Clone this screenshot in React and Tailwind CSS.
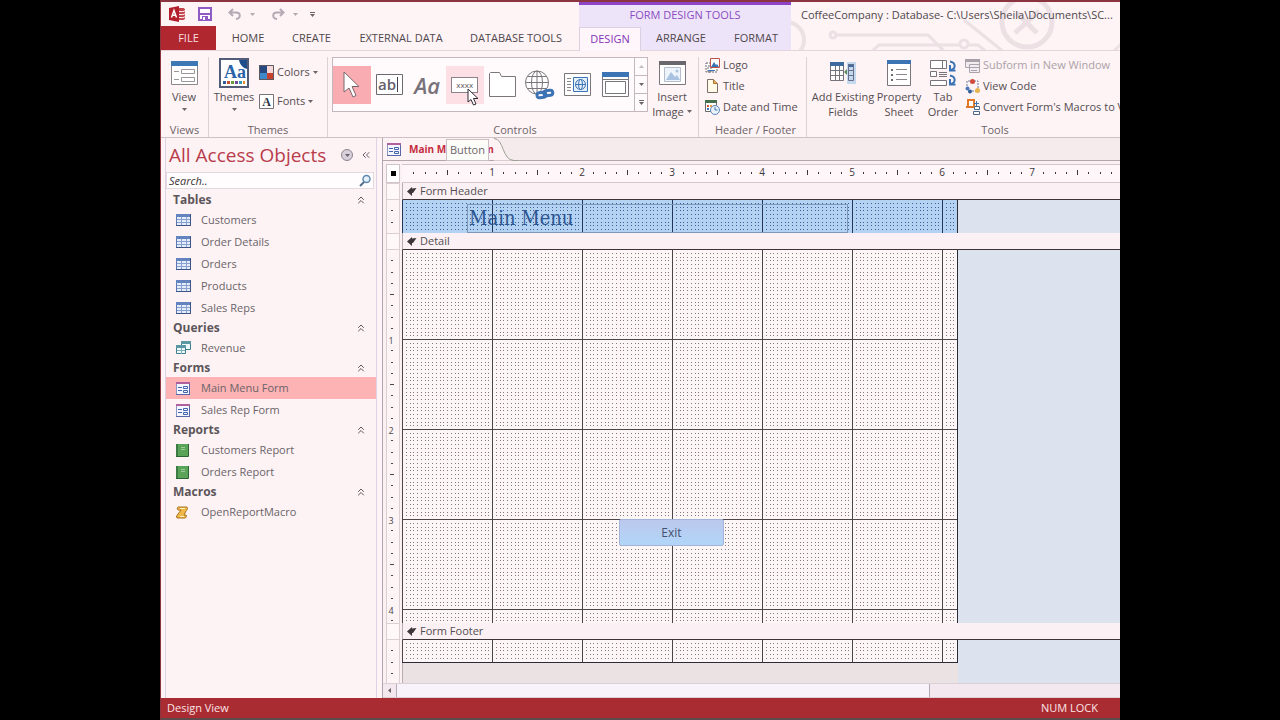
import React, { useState } from "react";
import { FiChevronsLeft, FiChevronsUp } from "react-icons/fi";

const navGroups = [
  {
    name: "Tables",
    icon: "table",
    items: ["Customers", "Order Details", "Orders", "Products", "Sales Reps"],
  },
  { name: "Queries", icon: "query", items: ["Revenue"] },
  { name: "Forms", icon: "form", items: ["Main Menu Form", "Sales Rep Form"] },
  {
    name: "Reports",
    icon: "report",
    items: ["Customers Report", "Orders Report"],
  },
  { name: "Macros", icon: "macro", items: ["OpenReportMacro"] },
];

// Pixels per inch on the rulers and the design grid
const INCH = 90;

/* ---------- Icons ---------- */

function Caret({ className = "" }) {
  return (
    <svg
      width="5"
      height="3"
      viewBox="0 0 5 3"
      className={`shrink-0 ${className}`}
    >
      <path d="M0 0h5L2.5 3z" fill="#6b6468" />
    </svg>
  );
}

function AccessLogo() {
  return (
    <svg width="17" height="16" viewBox="0 0 17 16">
      <path d="M9 2h4c2 0 3 .6 3 1.500v9c0 .9-1 1.500-3 1.500H9z" fill="#c4404a" />
      <path
        d="M10 5.500c3 .4 5 0 6-.8M10 8.500c3 .4 5 0 6-.8M10 11.500c3 .4 5 0 6-.8"
        stroke="#fff"
        fill="none"
      />
      <path d="M0 2l10-2v16L0 14z" fill="#b3202c" />
      <path
        d="M2.500 11.500L5 4.500l2.500 7M3.500 9.300h3"
        stroke="#fff"
        strokeWidth="1.500"
        fill="none"
      />
    </svg>
  );
}

function SaveIcon() {
  return (
    <svg width="14" height="14" viewBox="0 0 14 14">
      <path d="M1 1h12v12H1z" fill="#fff" stroke="#8f5cc4" strokeWidth="2" />
      <path d="M1 7h12" stroke="#8f5cc4" strokeWidth="2" />
      <path d="M4 9h6v4H4z" fill="#8f5cc4" />
      <path d="M5 10h2v3H5z" fill="#fff" />
    </svg>
  );
}

function UndoIcon({ flip }) {
  return (
    <svg
      width="14"
      height="12"
      viewBox="0 0 14 12"
      className={flip ? "-scale-x-100" : ""}
    >
      <path
        d="M5 1L1.500 4.500 5 8M2 4.500h6c5 0 5 6 0 6.500"
        fill="none"
        stroke="#b4aab4"
        strokeWidth="2"
      />
    </svg>
  );
}

function ViewIcon() {
  return (
    <svg width="27" height="25" viewBox="0 0 27 25">
      <path d="M.5.5h26v23H.5z" fill="#fff" stroke="#8b878c" />
      <path d="M0 0h27v5H0z" fill="#3c78b4" />
      <path d="M3 10.500h5M3 18.500h5" stroke="#9a969a" />
      <path
        d="M10.500 8.500h13v4h-13zM10.500 16.500h13v4h-13z"
        fill="none"
        stroke="#9a969a"
      />
    </svg>
  );
}

function ThemesIcon() {
  return (
    <svg width="30" height="30" viewBox="0 0 30 30">
      <path d="M1 1h20l8 8v20H1z" fill="#fff" />
      <path d="M1 1h28v28H1z" fill="none" stroke="#525c78" strokeWidth="2" />
      <path d="M20 2h8v9c-4-1-7-4-8-9z" fill="#1f4e8c" />
      <text
        x="5"
        y="20"
        fontSize="18"
        fontWeight="bold"
        fill="#2a64a8"
        className="font-['Liberation_Serif',serif]"
      >
        Aa
      </text>
      <path d="M4 23h3v3H4z" fill="#2f5f9f" />
      <path d="M8 23h3v3H8z" fill="#c8502c" />
      <path d="M12 23h3v3h-3z" fill="#6b9a3c" />
      <path d="M16 23h3v3h-3z" fill="#6a4c98" />
      <path d="M20 23h3v3h-3z" fill="#2e9ab8" />
      <path d="M24 23h2v3h-2z" fill="#e88c2c" />
    </svg>
  );
}

function ColorsIcon() {
  return (
    <svg width="15" height="15" viewBox="0 0 15 15">
      <path d="M0 0h8v8H0z" fill="#27487e" />
      <path d="M8 0h7v8H8z" fill="#f5d8d8" />
      <path d="M0 8h8v7H0z" fill="#3e88cc" />
      <path d="M8 8h7v7H8z" fill="#c8402e" />
      <path d="M.5.5h14v14H.5z" fill="none" stroke="#5c5860" />
    </svg>
  );
}

function FontsIcon() {
  return (
    <svg width="15" height="15" viewBox="0 0 15 15">
      <path d="M.5.5h14v14H.5z" fill="#fff" stroke="#77737a" />
      <text
        x="7.500"
        y="12"
        fontSize="12"
        fontWeight="bold"
        textAnchor="middle"
        fill="#2c3444"
        className="font-['Liberation_Serif',serif]"
      >
        A
      </text>
    </svg>
  );
}

function PointerIcon() {
  return (
    <svg width="17" height="27" viewBox="0 0 17 27">
      <path
        d="M1 1v20l5-4 4 9 3-1.500-4-9h7z"
        fill="#fff"
        stroke="#75686e"
      />
    </svg>
  );
}

function TextBoxIcon() {
  return (
    <svg width="27" height="21" viewBox="0 0 27 21" className="overflow-visible">
      <path d="M.5.5h26v20H.5z" fill="#fff" stroke="#6e6a70" />
      <text x="2" y="16" fontSize="15" fontWeight="600" fill="#66606a">
        ab
      </text>
      <path d="M21.500 3v15" stroke="#44404a" />
    </svg>
  );
}

function TabControlIcon() {
  return (
    <svg width="27" height="25" viewBox="0 0 27 25">
      <path
        d="M.5 24.500V1.500l1-1h9l2 4h14v20z"
        fill="#fff"
        stroke="#7a767c"
      />
    </svg>
  );
}

function GlobeLinkIcon() {
  return (
    <svg width="30" height="30" viewBox="0 0 30 30">
      <g fill="none" stroke="#7a767c">
        <circle cx="12" cy="12.500" r="11.500" fill="#fff" />
        <ellipse cx="12" cy="12.500" rx="5.500" ry="11.500" />
        <path d="M12 1v23M.5 12.500h23M2.500 6.500h19M2.500 18.500h19" />
      </g>
      <g
        fill="none"
        stroke="#3b73b4"
        strokeWidth="3"
        transform="rotate(-8 20 25)"
      >
        <rect x="12" y="22" width="9" height="5" rx="2.500" />
        <rect x="19" y="21" width="9" height="5" rx="2.500" />
      </g>
    </svg>
  );
}

function WebBrowserIcon() {
  return (
    <svg width="27" height="23" viewBox="0 0 27 23">
      <path d="M.5.5h26v22H.5z" fill="#fff" stroke="#7a767c" />
      <path
        d="M3 5.500h4M3 8.500h4M3 11.500h4M3 14.500h4M3 17.500h4"
        stroke="#8a868c"
      />
      <path d="M9.500 4.500h14v14h-14z" fill="#e6f0fa" stroke="#3b73b4" />
      <g fill="none" stroke="#3b73b4">
        <circle cx="16.500" cy="11.500" r="5" />
        <ellipse cx="16.500" cy="11.500" rx="2" ry="5" />
        <path d="M11.500 11.500h10" />
      </g>
    </svg>
  );
}

function NavigationIcon() {
  return (
    <svg width="27" height="25" viewBox="0 0 27 25">
      <path d="M.5.5h26v24H.5z" fill="#fff" stroke="#7a767c" />
      <path d="M0 0h27v5H0z" fill="#3b73b4" />
      <path
        d="M1 7.500h25M3.500 9.500h20v12h-20z"
        fill="none"
        stroke="#7a767c"
      />
    </svg>
  );
}

function InsertImageIcon() {
  return (
    <svg width="27" height="25" viewBox="0 0 27 25">
      <path d="M.5.5h26v23H.5z" fill="#fff" stroke="#7a767c" />
      <path d="M0 0h27v4H0z" fill="#6b676e" />
      <path d="M5.500 6.500h16v14h-16z" fill="#eef4fb" stroke="#b6bcc8" />
      <path d="M7 19l5-8 4 5 2-2 3 5z" fill="#a8c2e0" />
      <circle cx="18" cy="10" r="1.500" fill="#a8c2e0" />
    </svg>
  );
}

function LogoIcon() {
  return (
    <svg width="15" height="15" viewBox="0 0 15 15">
      <path
        d="M1 5h5v9H1zM3 8h9v6H3z"
        fill="#fff"
        stroke="#6c686e"
        strokeDasharray="2 1"
      />
      <path d="M5.500.5h9v9h-9z" fill="#fff" stroke="#c0504a" />
      <path d="M6 9l3-5 2 3 1-1 2 3z" fill="#3b73b4" />
      <path d="M3 12.500h7" stroke="#3b73b4" />
    </svg>
  );
}

function TitleIcon() {
  return (
    <svg width="15" height="14" viewBox="0 0 15 14">
      <path d="M2.500.5h6l4 4v9h-10z" fill="#fffbe8" stroke="#7a7068" />
      <path d="M8.500.5v4h4" fill="#e8b058" stroke="#b07830" />
    </svg>
  );
}

function DateTimeIcon() {
  return (
    <svg width="15" height="15" viewBox="0 0 15 15">
      <path d="M.5.5h11v11H.5z" fill="#fff" stroke="#6c686e" />
      <path d="M0 0h12v3H0z" fill="#44704c" />
      <path d="M2 5h2v2H2z" fill="#d85a3c" />
      <path d="M5 5h2v2H5zM8 5h2v2H8z" fill="#e8a03c" />
      <path d="M2 8h2v2H2z" fill="#3b73b4" />
      <circle cx="10" cy="10" r="4.500" fill="#eaf2fb" stroke="#5a86ba" />
      <path d="M10 7v3h2.500" fill="none" stroke="#3b73b4" />
    </svg>
  );
}

function AddFieldsIcon() {
  return (
    <svg width="27" height="22" viewBox="0 0 27 22">
      <path d="M17 0h9v22h-9z" fill="#c4d8ee" />
      <path d="M.5.5h13v18H.5z" fill="#fff" stroke="#77737a" />
      <path d="M0 0h14v4H0zM18 2h6v3h-6z" fill="#3e6aa0" />
      <path
        d="M1 8.500h13M1 13.500h13M5.500 4v15M9.500 4v15"
        stroke="#77737a"
      />
      <path
        d="M18.500 2.500h5v16h-5zM18 8.500h6M18 13.500h6"
        fill="none"
        stroke="#66708a"
      />
      <path d="M17 7l-3 3 3 3z" fill="#5a8a58" />
    </svg>
  );
}

function PropertySheetIcon() {
  return (
    <svg width="24" height="26" viewBox="0 0 24 26">
      <path d="M.5.5h23v25H.5z" fill="#fff" stroke="#7a767c" />
      <path d="M0 0h24v4H0z" fill="#3b73b4" />
      <path d="M9 9.500h11M9 14.500h11M9 19.500h11" stroke="#8a868c" />
      <path d="M4 9h2v2H4zM4 14h2v2H4zM4 19h2v2H4z" fill="#6c686e" />
    </svg>
  );
}

function TabOrderIcon() {
  return (
    <svg width="27" height="27" viewBox="0 0 27 27">
      <g fill="#fff" stroke="#77737a">
        <path d="M.5.5h16v8H.5zM12.500.5v8M.5 11.500h6v5h-6zM.5 20.500h16v5H.5z" />
        <path d="M9 12.500h8M9 14.500h8M9 16.500h8" />
      </g>
      <g fill="none" stroke="#3b73b4" strokeWidth="2">
        <path d="M20 1.500c6 1 6 7 1 8.500M20 15.500c6 1 6 7 1 8.500" />
        <path d="M20 5v5.500h5.500M20 19v5.500h5.500" />
      </g>
    </svg>
  );
}

function SubformIcon() {
  return (
    <svg width="15" height="15" viewBox="0 0 15 15">
      <path
        d="M.5 1.500h14v8H.5zM4.500 6.500h10v8h-10z"
        fill="#f2ecf0"
        stroke="#aaa4aa"
      />
      <path d="M0 1h15v3H0z" fill="#a8a2a8" />
      <path d="M6 9.500h6M6 12.500h6" stroke="#aaa4aa" />
    </svg>
  );
}

function ViewCodeIcon() {
  return (
    <svg width="15" height="15" viewBox="0 0 15 15">
      <path
        d="M5 2H2v7M9 2h4v7M4 12h7"
        stroke="#6c7a98"
        fill="none"
        strokeDasharray="2 1"
      />
      <circle cx="7.500" cy="2.500" r="2.500" fill="#d04a3c" />
      <circle cx="2.500" cy="9.500" r="2" fill="#4a78b8" />
      <circle cx="5" cy="12.500" r="2" fill="#2f5c9c" />
      <circle cx="12.500" cy="11.500" r="2.500" fill="#e8b44c" />
    </svg>
  );
}

function ConvertIcon() {
  return (
    <svg width="15" height="16" viewBox="0 0 15 16">
      <path
        d="M3 1h6v7H3zM1 8h6"
        fill="#fff"
        stroke="#e07828"
        strokeWidth="2"
      />
      <path d="M11.500 2v5M9 4.500h5" stroke="#3b73b4" />
      <path
        d="M9.500 7.500h5v3h-5zM8.500 12.500h6v3h-6z"
        fill="#fff"
        stroke="#4a6888"
      />
    </svg>
  );
}

function ObjectIcon({ type }) {
  if (type === "query") {
    return (
      <svg width="15" height="14" viewBox="0 0 15 14">
        <path d="M5.500.5h9v8h-9z" fill="#eef8fa" stroke="#3f7f8c" />
        <path d="M5 0h10v3H5z" fill="#5c98a4" />
        <path d="M.500 4.500h9v8h-9z" fill="#eef8fa" stroke="#3f7f8c" />
        <path d="M0 4h10v3H0z" fill="#5c98a4" />
        <path d="M1 9.500h8M5.500 7v6" stroke="#7fb0ba" />
      </svg>
    );
  }
  if (type === "form") {
    return (
      <svg width="14" height="13" viewBox="0 0 14 13">
        <path d="M.5.5h13v12H.5z" fill="#f4f6ff" stroke="#8a94c4" />
        <path d="M0 0h14v2H0z" fill="#b0609c" />
        <path d="M0 12.500h14M13.500 2v11" stroke="#5868a8" />
        <path
          d="M2 5.500h4M2 8.500h4M7.500 4.500h4v2h-4zM7.500 8.500h4v2h-4z"
          fill="none"
          stroke="#4464b0"
        />
      </svg>
    );
  }
  if (type === "report") {
    return (
      <svg width="13" height="13" viewBox="0 0 13 13">
        <path d="M0 0h12v12H0z" fill="#5aa45a" />
        <path d="M0 0h2v12H0z" fill="#3c7c44" />
        <path d="M0 12.500h12.500V0" fill="none" stroke="#2c6434" />
        <path d="M5 3.500h4M5 5.500h4" stroke="#9ccc9a" />
      </svg>
    );
  }
  if (type === "macro") {
    return (
      <svg width="13" height="13" viewBox="0 0 13 13">
        <path
          d="M2 1h9c1 2 0 3-1 4L8 9h2c1 1 0 3-1 3H1c-1-1 0-3 1-4l3-4H2C1 3 1 2 2 1z"
          fill="#f0b848"
          stroke="#a87420"
        />
        <path d="M4 2.500h5M4 10.500h4" stroke="#fff0b8" />
      </svg>
    );
  }
  return (
    <svg width="15" height="12" viewBox="0 0 15 12">
      <path d="M.5.5h14v11H.5z" fill="#e4ecfa" stroke="#5c78b4" />
      <path d="M0 0h15v3H0z" fill="#6484c0" />
      <path d="M0 11.500h15M14.500 0v12" stroke="#3c5488" />
      <path d="M1 5.500h13M1 8.500h13M5.500 3v8M10.500 3v8" stroke="#87a0d0" />
    </svg>
  );
}

function Circuit() {
  return (
    <svg
      className="absolute inset-0 h-full w-full"
      fill="none"
      stroke="#ece0e5"
      strokeWidth="3"
    >
      <circle cx="-5" cy="38" r="18" strokeWidth="4" />
      <circle cx="42" cy="33" r="3" />
      <path d="M45 33h92l16 16" />
      <path d="M80 50l8-7h82M177 43h10l10 8" />
      <circle cx="173" cy="42" r="4" />
      <path d="M173 18l40 32" />
      <circle cx="236" cy="20" r="25" strokeWidth="5" />
      <path d="M224 31l24-22M226 11l20 20" strokeWidth="5" />
      <path d="M322 50l8-8" />
    </svg>
  );
}

/* ---------- Ribbon ---------- */

function RibbonTab({ label, className, color = "text-[#4e484c]" }) {
  return (
    <button className={`h-6 text-center whitespace-nowrap ${color} ${className}`}>
      {label}
    </button>
  );
}

function Header() {
  return (
    <header className="flex h-[51px] shrink-0 border-t-2 border-[#8a3440] text-[11px]">
      <div className="flex w-[418px] shrink-0 flex-col">
        <div className="flex h-[25px] items-center pl-2">
          <AccessLogo />
          <button aria-label="Save" className="ml-3">
            <SaveIcon />
          </button>
          <button aria-label="Undo" className="ml-4 flex items-center gap-2">
            <UndoIcon />
            <Caret className="opacity-50" />
          </button>
          <button aria-label="Redo" className="ml-4 flex items-center gap-2">
            <UndoIcon flip />
            <Caret className="opacity-50" />
          </button>
          <button
            aria-label="Customize toolbar"
            className="ml-3 flex flex-col items-center gap-px"
          >
            <span className="h-px w-[5px] bg-[#6b6468]" />
            <Caret />
          </button>
        </div>
        <nav className="flex border-b border-[#e4d6dc]">
          <RibbonTab
            label="FILE"
            color="text-[#fbdfe2]"
            className="w-[55px] bg-[#b0272f]"
          />
          <RibbonTab label="HOME" className="ml-[2px] w-[60px]" />
          <RibbonTab label="CREATE" className="w-[67px]" />
          <RibbonTab label="EXTERNAL DATA" className="w-28" />
          <RibbonTab label="DATABASE TOOLS" className="w-[118px]" />
        </nav>
      </div>
      <div className="flex w-[212px] shrink-0 flex-col bg-[#eee4f9]">
        <div className="h-[26px] border-t-3 border-[#8e44c4] text-center leading-5 text-[#8a4cc0]">
          FORM DESIGN TOOLS
        </div>
        <nav className="-mt-px flex">
          <RibbonTab
            label="DESIGN"
            color="text-[#8434b8]"
            className="w-[62px] border-x border-t border-[#dccfe0] bg-[#fef6fa]"
          />
          <RibbonTab
            label="ARRANGE"
            className="w-20 border-b border-[#e4d6dc]"
          />
          <RibbonTab
            label="FORMAT"
            className="w-[70px] border-b border-[#e4d6dc]"
          />
        </nav>
      </div>
      <div className="relative min-w-0 flex-1 overflow-hidden border-b border-[#e4d6dc]">
        <Circuit />
        <h1 className="relative pl-[10px] leading-[26px] whitespace-nowrap text-[#4e484c]">
          CoffeeCompany : Database- C:\Users\Sheila\Documents\SC...
        </h1>
      </div>
    </header>
  );
}

function RibbonGroup({ label, className, children }) {
  return (
    <section
      className={`flex shrink-0 flex-col justify-between border-r border-[#ddd0d6] ${className}`}
    >
      <div className="flex">{children}</div>
      <h2 className="text-center leading-[14px] text-[#6c6468]">{label}</h2>
    </section>
  );
}

function BigButton({ icon, lines, className, caret }) {
  return (
    <button className={`flex shrink-0 flex-col items-center ${className}`}>
      <span className="flex h-8 items-center">{icon}</span>
      {lines.map((line, i) => (
        <span
          key={line}
          className="flex items-center gap-[3px] leading-[15px] whitespace-nowrap"
        >
          {line}
          {caret === "side" && i === lines.length - 1 && <Caret />}
        </span>
      ))}
      {caret === "below" && <Caret className="mt-1" />}
    </button>
  );
}

function SmallButton({ icon, label, caret, disabled }) {
  return (
    <button
      disabled={disabled}
      className="flex h-4 items-center gap-[3px] whitespace-nowrap disabled:text-[#aaa2a8]"
    >
      {icon}
      {label}
      {caret && <Caret />}
    </button>
  );
}

function ControlsGallery() {
  const cell = "flex h-[38px] flex-1 items-center justify-center";
  return (
    <div className="flex h-[55px] w-[316px] border border-[#c4b8be] bg-[#fffafb]">
      <div className="flex flex-1 items-center">
        <button aria-label="Select" className={`${cell} bg-[#f9adb2]`}>
          <PointerIcon />
        </button>
        <button aria-label="Text Box" className={cell}>
          <TextBoxIcon />
        </button>
        <button
          aria-label="Label"
          className={`${cell} text-[22px] font-semibold text-[#77717a] italic`}
        >
          Aa
        </button>
        <button
          aria-describedby="control-tip"
          className={`${cell} relative bg-[#fde0e6]`}
        >
          <span className="border border-[#8a848a] bg-white px-1 text-[8px] leading-[14px] text-[#5c565c]">
            xxxx
          </span>
          <svg
            width="12"
            height="18"
            viewBox="0 0 12 18"
            className="absolute top-[22px] left-[21px] z-10"
          >
            <path
              d="M1 1v13l3-2.500 2.500 5.500 2.500-1-2.500-5.500H11z"
              fill="#fff"
              stroke="#2c2c34"
            />
          </svg>
          <span
            id="control-tip"
            role="tooltip"
            className="absolute top-[73px] left-0 z-10 border border-[#c8c0c4] bg-[#fcfcf8] px-[3px] leading-5 text-[#6c666c]"
          >
            Button
          </span>
        </button>
        <button aria-label="Tab Control" className={cell}>
          <TabControlIcon />
        </button>
        <button aria-label="Hyperlink" className={cell}>
          <GlobeLinkIcon />
        </button>
        <button aria-label="Web Browser" className={cell}>
          <WebBrowserIcon />
        </button>
        <button aria-label="Navigation" className={cell}>
          <NavigationIcon />
        </button>
      </div>
      <div className="flex w-[13px] flex-col divide-y divide-[#c4b8be] border-l border-[#c4b8be]">
        <button
          aria-label="Scroll up"
          className="flex flex-1 items-center justify-center"
        >
          <Caret className="rotate-180 opacity-40" />
        </button>
        <button
          aria-label="Scroll down"
          className="flex flex-1 items-center justify-center"
        >
          <Caret />
        </button>
        <button
          aria-label="More controls"
          className="flex flex-1 flex-col items-center justify-center gap-px"
        >
          <span className="h-px w-[5px] bg-[#6b6468]" />
          <Caret />
        </button>
      </div>
    </div>
  );
}

function Ribbon() {
  return (
    <div className="flex h-[87px] shrink-0 border-b border-[#cfc0c6] pt-[6px] text-[11px] leading-4 text-[#544e52]">
      <RibbonGroup label="Views" className="w-12">
        <BigButton
          icon={<ViewIcon />}
          lines={["View"]}
          caret="below"
          className="w-[46px]"
        />
      </RibbonGroup>
      <RibbonGroup label="Themes" className="w-[119px]">
        <BigButton
          icon={<ThemesIcon />}
          lines={["Themes"]}
          caret="below"
          className="w-[50px]"
        />
        <div className="flex flex-col gap-[13px] pt-[7px]">
          <SmallButton icon={<ColorsIcon />} label="Colors" caret />
          <SmallButton icon={<FontsIcon />} label="Fonts" caret />
        </div>
      </RibbonGroup>
      <RibbonGroup label="Controls" className="w-[371px] pl-1">
        <ControlsGallery />
        <BigButton
          icon={<InsertImageIcon />}
          lines={["Insert", "Image"]}
          caret="side"
          className="w-12"
        />
      </RibbonGroup>
      <RibbonGroup label="Header / Footer" className="w-[108px] pl-[6px]">
        <div className="flex flex-col gap-[5px]">
          <SmallButton icon={<LogoIcon />} label="Logo" />
          <SmallButton icon={<TitleIcon />} label="Title" />
          <SmallButton icon={<DateTimeIcon />} label="Date and Time" />
        </div>
      </RibbonGroup>
      <RibbonGroup label="Tools" className="w-[372px] pl-[5px]">
        <BigButton
          icon={<AddFieldsIcon />}
          lines={["Add Existing", "Fields"]}
          className="w-[62px]"
        />
        <BigButton
          icon={<PropertySheetIcon />}
          lines={["Property", "Sheet"]}
          className="w-[50px]"
        />
        <BigButton
          icon={<TabOrderIcon />}
          lines={["Tab", "Order"]}
          className="w-[38px]"
        />
        <div className="flex flex-col gap-[5px] pl-[3px]">
          <SmallButton
            icon={<SubformIcon />}
            label="Subform in New Window"
            disabled
          />
          <SmallButton icon={<ViewCodeIcon />} label="View Code" />
          <SmallButton
            icon={<ConvertIcon />}
            label="Convert Form's Macros to V"
          />
        </div>
      </RibbonGroup>
    </div>
  );
}

/* ---------- Navigation pane ---------- */

function NavigationPane({ selected, onSelect }) {
  const [query, setQuery] = useState("");

  return (
    <aside className="ml-1 flex w-[212px] shrink-0 flex-col border-x border-[#dcd4e4] bg-[#fdf3f5]">
      <div className="flex h-[34px] items-center pl-[3px]">
        <h2 className="flex-1 text-[19px] whitespace-nowrap text-[#b83c4c]">
          All Access Objects
        </h2>
        <button
          aria-label="Filter objects"
          className="mr-[7px] flex h-3 w-3 items-center justify-center rounded-full border border-[#8c868e] bg-[#d8d0da]"
        >
          <Caret />
        </button>
        <button aria-label="Collapse pane" className="mr-1 text-[#66606a]">
          <FiChevronsLeft size={12} />
        </button>
      </div>
      <div className="mr-[2px] flex h-[17px] items-center border border-[#e2dae0] bg-[#fffdfd]">
        <input
          type="text"
          aria-label="Search objects"
          placeholder="Search.."
          value={query}
          onChange={(e) => setQuery(e.target.value)}
          className="w-0 flex-1 pl-[2px] text-[11px] leading-[15px] outline-none placeholder:text-[#3c3438] placeholder:italic"
        />
        <svg width="14" height="14" viewBox="0 0 14 14" className="mr-px">
          <circle
            cx="8.500"
            cy="5"
            r="3.500"
            fill="#e4f0fa"
            stroke="#6088b0"
            strokeWidth="1.500"
          />
          <path d="M6 8l-4 4" stroke="#50708c" strokeWidth="2" />
        </svg>
      </div>
      <div className="pt-[2px]">
        {navGroups.map((group) => (
          <section key={group.name}>
            <button className="flex h-[18px] w-full items-center justify-between pr-[9px] pl-[7px] text-xs font-bold text-[#5c565a]">
              {group.name}
              <FiChevronsUp size={12} />
            </button>
            <ul>
              {group.items.map((item) => (
                <li key={item}>
                  <button
                    onClick={() => onSelect(item)}
                    className={`flex h-[22px] w-full items-center pl-[10px] text-[11px] text-[#6a6468] ${
                      selected === item ? "bg-[#fdb2b4]" : ""
                    }`}
                  >
                    <span className="w-[25px]">
                      <ObjectIcon type={group.icon} />
                    </span>
                    {item}
                  </button>
                </li>
              ))}
            </ul>
          </section>
        ))}
      </div>
    </aside>
  );
}

/* ---------- Form designer ---------- */

function HorizontalRuler() {
  const marks = Array.from({ length: 63 }, (_, i) => i + 1);
  return (
    <svg className="h-full w-full" fill="#3c363a">
      {marks.map((n) => {
        const x = Math.round((n * INCH) / 8);
        if (n % 8 === 0) {
          return (
            <text key={n} x={x} y="11" fontSize="10" textAnchor="middle">
              {n / 8}
            </text>
          );
        }
        return n % 4 === 0 ? (
          <rect key={n} x={x} y="5" width="1" height="5" />
        ) : (
          <rect key={n} x={x} y="7" width="1" height="2" />
        );
      })}
    </svg>
  );
}

function VerticalRuler({ marks }) {
  const list = Array.from({ length: marks }, (_, i) => i + 1);
  return (
    <svg className="h-full w-full" fill="#4c464a">
      {list.map((n) => {
        const y = Math.round((n * INCH) / 8) - 1;
        if (n % 8 === 0) {
          return (
            <text key={n} x="4" y={y + 5} fontSize="9" textAnchor="middle">
              {n / 8}
            </text>
          );
        }
        return n % 4 === 0 ? (
          <rect key={n} x="3" y={y} width="4" height="1" />
        ) : (
          <rect key={n} x="4" y={y} width="2" height="1" />
        );
      })}
    </svg>
  );
}

function DesignGrid({ id, dot, line }) {
  // 24 dots to the inch
  const steps = Array.from({ length: 23 }, (_, i) =>
    Math.round(((i + 1) * INCH) / 24)
  );
  return (
    <svg className="absolute inset-0 h-full w-full">
      <pattern
        id={id}
        y="-1"
        width={INCH}
        height={INCH}
        patternUnits="userSpaceOnUse"
      >
        {steps.map((y) =>
          steps.map((x) => (
            <rect
              key={`${x}-${y}`}
              x={x}
              y={y}
              width="1"
              height="1"
              fill={dot}
            />
          ))
        )}
        <rect width={INCH} height="1" fill={line} />
        <rect width="1" height={INCH} fill={line} />
      </pattern>
      <rect width="100%" height="100%" fill={`url(#${id})`} />
    </svg>
  );
}

function FormSection({
  title,
  id,
  height,
  marks,
  tint,
  dot,
  line,
  children,
}) {
  return (
    <section>
      <div className="flex h-[17px]">
        <div className="mr-[2px] w-[14px] border border-[#dccfd4] bg-[#fff8f9]" />
        <h3 className="flex flex-1 items-center gap-[3px] border-b border-l border-[#3c3438] border-l-[#b8acb2] bg-[#fbf1f4] pl-1 text-[11px] leading-4 text-[#544e52]">
          <svg width="10" height="9" viewBox="0 0 10 9">
            <path d="M0 4.500L5 0v1.500L9.500 1 7 4.500 6 6H5v3z" fill="#3c363a" />
          </svg>
          {title}
        </h3>
      </div>
      <div className={`flex ${height}`}>
        <div className="mr-[2px] w-[14px] border-x border-[#dccfd4] bg-[#fdf4f6]">
          <VerticalRuler marks={marks} />
        </div>
        <div
          className={`relative w-[556px] shrink-0 border-r border-[#2c2a34] ${tint}`}
        >
          <DesignGrid id={id} dot={dot} line={line} />
          {children}
        </div>
        <div className="flex-1 bg-[#dde3ee]" />
      </div>
    </section>
  );
}

function FormDesigner() {
  return (
    <main className="ml-[5px] flex min-w-0 flex-1 flex-col overflow-hidden border-l border-[#b0a4b0] bg-[#fbf1f3]">
      <div className="flex h-[23px] shrink-0 border-b border-[#b4a6ac] bg-[#f5eaec]">
        <button className="flex items-center gap-2 bg-[#fdf3f5] pl-1 text-[10px] font-bold whitespace-nowrap text-[#c42c3c]">
          <ObjectIcon type="form" />
          Main Menu Form
        </button>
        <svg width="24" height="23" viewBox="0 0 24 23" className="shrink-0">
          <path d="M0 0c10 0 8 22 20 22.500H0z" fill="#fdf3f5" />
          <path
            d="M0 .5c10 0 8 22 20 22h4"
            fill="none"
            stroke="#9aa094"
          />
        </svg>
      </div>
      <div className="flex h-[22px] shrink-0 pt-[3px] pl-[3px]">
        <button
          aria-label="Select form"
          className="mr-[2px] flex w-[14px] items-center justify-center border border-[#d0c4ca] bg-white"
        >
          <span className="h-[5px] w-[5px] bg-black" />
        </button>
        <div className="min-w-0 flex-1 border-y border-[#d4c6cc] bg-[#fef6f8]">
          <HorizontalRuler />
        </div>
      </div>
      <div className="pl-[3px]">
        <FormSection
          title="Form Header"
          id="grid-header"
          height="h-[33px]"
          marks={2}
          tint="bg-[#b4d2f2]"
          dot="#3c5c98"
          line="#24365c"
        >
          <div className="absolute top-1 left-[65px] h-[29px] w-[381px] border border-[#7f98b8] pl-px font-['DejaVu_Serif_Condensed','DejaVu_Serif',serif] text-xl leading-[26px] whitespace-nowrap text-[#2c5690]">
            Main Menu
          </div>
        </FormSection>
        <FormSection
          title="Detail"
          id="grid-detail"
          height="h-[373px]"
          marks={33}
          tint="bg-[#fdf6f6]"
          dot="#84767a"
          line="#4c4448"
        >
          <button className="absolute top-[269px] left-[217px] h-[27px] w-[105px] rounded-xs border border-[#a4b4d8] bg-linear-to-b from-[#bcc8ee] to-[#b0d6f8] text-xs text-[#44506c]">
            Exit
          </button>
        </FormSection>
        <FormSection
          title="Form Footer"
          id="grid-footer"
          height="h-[23px]"
          marks={2}
          tint="border-b bg-[#fdf6f6]"
          dot="#84767a"
          line="#4c4448"
        />
      </div>
      <div className="flex min-h-0 flex-1 pl-[3px]">
        <div className="mr-[2px] w-[14px] border-x border-[#dccfd4] bg-[#fdf4f6]">
          <VerticalRuler marks={1} />
        </div>
        <div className="w-[556px] shrink-0 border-l border-[#b8acb2] bg-[#ebe2e3]" />
        <div className="flex-1 bg-[#dde3ee]" />
      </div>
      <div className="flex h-[15px] shrink-0 border-y border-[#dccfd8] bg-[#f3e8ee]">
        <button
          aria-label="Scroll left"
          className="flex w-[14px] items-center justify-center border-r border-[#b8acb4]"
        >
          <Caret className="rotate-90" />
        </button>
        <div className="w-[533px] border-r border-[#b0a8b4] bg-[#f8f3fb]" />
      </div>
    </main>
  );
}

export default function App() {
  const [selected, setSelected] = useState("Main Menu Form");

  return (
    <div className="flex h-screen justify-center bg-black">
      <div className="flex w-3/4 flex-col overflow-hidden border-l border-[#8a3440] bg-[#fef3f5] font-['Open_Sans','Noto_Sans',sans-serif]">
        <Header />
        <Ribbon />
        <div className="flex min-h-0 flex-1">
          <NavigationPane selected={selected} onSelect={setSelected} />
          <FormDesigner />
        </div>
        <footer className="flex h-[22px] shrink-0 items-center justify-between border-b-2 border-[#5c4a4c] bg-[#a92c33] pr-[22px] pl-[6px] text-[11px] text-[#fbe4e6]">
          <span>Design View</span>
          <span>NUM LOCK</span>
        </footer>
      </div>
    </div>
  );
}
